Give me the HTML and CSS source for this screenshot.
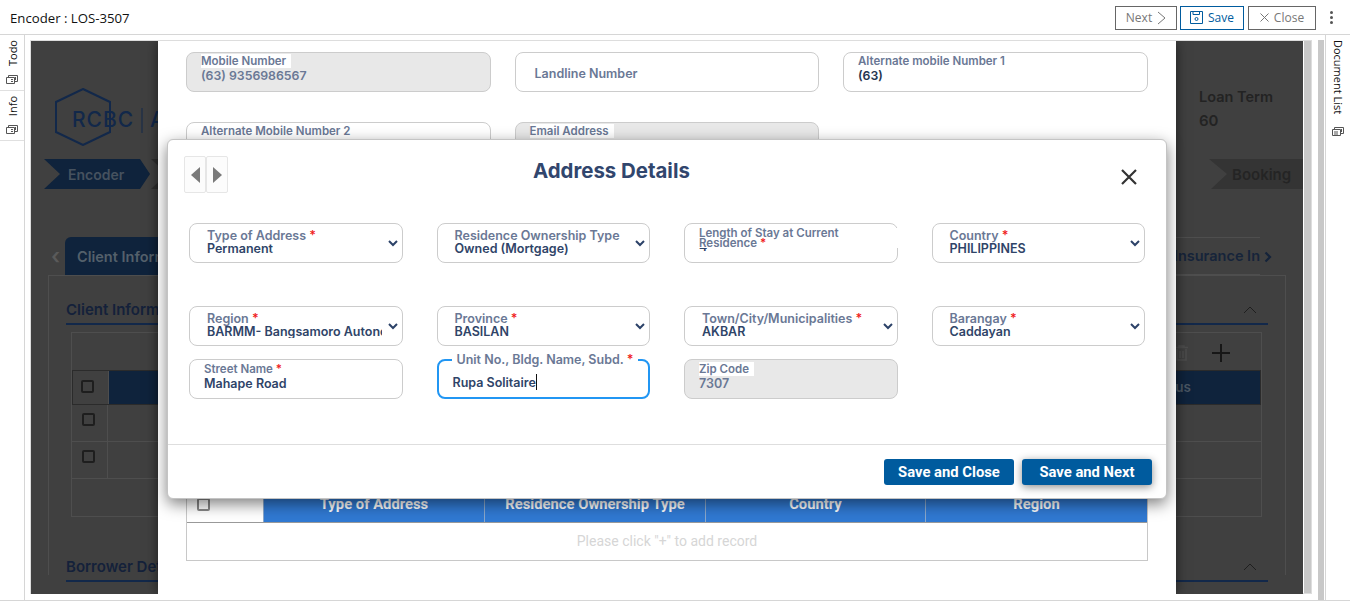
FILE: index.html
```html
<!DOCTYPE html>
<html lang="en">
<head>
  <meta charset="UTF-8">
  <title>Encoder : LOS-3507</title>
  <link rel="stylesheet" href="styles.css">
</head>
<body>
  <header class="topbar">
    <div class="topbar-title">Encoder : LOS-3507</div>
    <button class="tool-btn tool-next">Next
      <svg width="9" height="14" viewBox="0 0 9 14"><path d="M1 1l7 6-7 6" fill="none" stroke="#777" stroke-width="1"/></svg>
    </button>
    <button class="tool-btn tool-save">
      <svg width="13" height="13" viewBox="0 0 13 13" fill="none" stroke="#005b9e"><path d="M.5.5h12v12H.5z"/><path d="M3 .5v3h6.5v-3"/><circle cx="6.5" cy="8" r="1.5"/></svg>
      Save
    </button>
    <button class="tool-btn tool-close">
      <svg width="9" height="9" viewBox="0 0 9 9"><path d="M.5.5l8 8M8.5.5l-8 8" stroke="#777" fill="none"/></svg>
      Close
    </button>
    <div class="kebab"><i></i><i></i><i></i></div>
  </header>

  <div class="workspace">
    <nav class="rail rail-left">
      <div class="rail-tab rail-tab-todo">
        <span class="rail-text">Todo</span>
        <svg class="rail-icon" width="12" height="10" viewBox="0 0 12 10" fill="none" stroke="#555"><path d="M.5 3.5h8v6h-8zM2.5 3.5v-2h9v6h-3M5 5.5h2M5 7.5h2M9.5 3v3"/></svg>
      </div>
      <div class="rail-tab rail-tab-info">
        <span class="rail-text">Info</span>
        <svg class="rail-icon" width="12" height="10" viewBox="0 0 12 10" fill="none" stroke="#555"><path d="M.5 3.5h8v6h-8zM2.5 3.5v-2h9v6h-3M5 5.5h2M5 7.5h2M9.5 3v3"/></svg>
      </div>
    </nav>

    <main class="frame">
      <div class="stage">
        <!-- page behind the dialogs -->
        <div class="backdrop">
          <div class="bd-head">
            <svg class="bd-logo" width="108" height="58" viewBox="0 0 108 58" fill="none" stroke="#12284a" stroke-width="2">
              <path d="M28 1l27 13v30L28 57 1 44V14z"/>
              <text x="17" y="39" font-family="Inter, sans-serif" font-size="21" font-weight="500" letter-spacing="1" fill="#12284a" stroke="none">RCBC</text>
              <path d="M87 20v25" stroke-width="1"/>
              <text x="95" y="39" font-family="Inter, sans-serif" font-size="21" font-weight="500" fill="#12284a" stroke="none">A</text>
            </svg>
            <div class="bd-loan">
              <div>Loan Term</div>
              <div class="bd-loan-val">60</div>
            </div>
          </div>
          <div class="steps">
            <div class="step step-active">Encoder</div>
            <div class="step step-next"></div>
            <div class="step step-last">Booking</div>
          </div>
          <div class="bd-tabs">
            <span class="bd-tab-prev">‹</span>
            <div class="bd-tab">Client Information</div>
            <div class="bd-tab-rest">Insurance In</div>
            <svg class="bd-tab-next" width="8" height="12" viewBox="0 0 8 12"><path d="M1.5 1.5L6 6l-4.5 4.5" fill="none" stroke="#14233a" stroke-width="2.2"/></svg>
          </div>
          <div class="bd-panel">
            <div class="bd-section">
              <span>Client Information</span>
              <svg width="14" height="8" viewBox="0 0 14 8"><path d="M1 7l6-6 6 6" fill="none" stroke="#1f1f1f"/></svg>
            </div>
            <div class="bd-table">
              <div class="bd-tools">
                <svg width="13" height="16" viewBox="0 0 13 16" fill="none" stroke="#4c4c4c" stroke-width="1.5"><path d="M0 2.5h13M4 2.5V1h5v1.5M2 4v11h9V4M5 6v7M8 6v7"/></svg>
                <svg width="18" height="18" viewBox="0 0 18 18"><path d="M9 0v18M0 9h18" stroke="#171717" stroke-width="2"/></svg>
              </div>
              <div class="bd-row bd-row-head">
                <div class="bd-check"><i></i></div>
                <div class="bd-head-fill"><span>Status</span></div>
              </div>
              <div class="bd-row"><div class="bd-check"><i></i></div></div>
              <div class="bd-row"><div class="bd-check"><i></i></div></div>
            </div>
            <div class="bd-section bd-section-2">
              <span>Borrower Details</span>
              <svg width="14" height="8" viewBox="0 0 14 8"><path d="M1 7l6-6 6 6" fill="none" stroke="#1f1f1f"/></svg>
            </div>
          </div>
        </div>

        <!-- first dialog -->
        <section class="sheet">
          <div class="sheet-row">
            <div class="field field-wide field-off"><span class="field-label">Mobile Number</span><span class="field-value">(63) 9356986567</span></div>
            <div class="field field-wide field-empty"><span class="field-label">Landline Number</span></div>
            <div class="field field-wide"><span class="field-label">Alternate mobile Number 1</span><span class="field-value field-dark">(63)</span></div>
          </div>
          <div class="sheet-row sheet-row-2">
            <div class="field field-wide"><span class="field-label">Alternate Mobile Number 2</span></div>
            <div class="field field-wide field-off field-email"><span class="field-label">Email Address</span></div>
          </div>
          <div class="sheet-table">
            <div class="sheet-thead">
              <div class="sheet-th-check"><i></i></div>
              <div class="sheet-th">Type of Address</div>
              <div class="sheet-th">Residence Ownership Type</div>
              <div class="sheet-th">Country</div>
              <div class="sheet-th">Region</div>
            </div>
            <div class="sheet-empty">Please click "+" to add record</div>
          </div>
        </section>

        <!-- address dialog -->
        <section class="modal">
          <div class="modal-head">
            <div class="pager">
              <button class="pager-btn"><span class="tri tri-left"></span></button>
              <button class="pager-btn"><span class="tri tri-right"></span></button>
            </div>
            <h2 class="modal-title">Address Details</h2>
            <svg class="modal-x" width="16" height="16" viewBox="0 0 16 16"><path d="M1 1l14 14M15 1L1 15" stroke="#333" stroke-width="2.2" fill="none"/></svg>
          </div>

          <div class="modal-grid">
            <div class="field field-select"><span class="field-label">Type of Address <b>*</b></span><span class="field-value">Permanent</span><svg class="caret" width="10" height="7" viewBox="0 0 10 7"><path d="M1 1l4 4 4-4" fill="none" stroke="#2c4268" stroke-width="2"/></svg></div>
            <div class="field field-select"><span class="field-label">Residence Ownership Type</span><span class="field-value">Owned (Mortgage)</span><svg class="caret" width="10" height="7" viewBox="0 0 10 7"><path d="M1 1l4 4 4-4" fill="none" stroke="#2c4268" stroke-width="2"/></svg></div>
            <div class="field field-long"><span class="field-label">Length of Stay at Current Residence <b>*</b></span><span class="field-value">4</span></div>
            <div class="field field-select"><span class="field-label">Country <b>*</b></span><span class="field-value">PHILIPPINES</span><svg class="caret" width="10" height="7" viewBox="0 0 10 7"><path d="M1 1l4 4 4-4" fill="none" stroke="#2c4268" stroke-width="2"/></svg></div>

            <div class="field field-select row-gap"><span class="field-label">Region <b>*</b></span><span class="field-value field-clip">BARMM- Bangsamoro Autonomous Region</span><svg class="caret" width="10" height="7" viewBox="0 0 10 7"><path d="M1 1l4 4 4-4" fill="none" stroke="#2c4268" stroke-width="2"/></svg></div>
            <div class="field field-select row-gap"><span class="field-label">Province <b>*</b></span><span class="field-value">BASILAN</span><svg class="caret" width="10" height="7" viewBox="0 0 10 7"><path d="M1 1l4 4 4-4" fill="none" stroke="#2c4268" stroke-width="2"/></svg></div>
            <div class="field field-select row-gap"><span class="field-label">Town/City/Municipalities <b>*</b></span><span class="field-value">AKBAR</span><svg class="caret" width="10" height="7" viewBox="0 0 10 7"><path d="M1 1l4 4 4-4" fill="none" stroke="#2c4268" stroke-width="2"/></svg></div>
            <div class="field field-select row-gap"><span class="field-label">Barangay <b>*</b></span><span class="field-value">Caddayan</span><svg class="caret" width="10" height="7" viewBox="0 0 10 7"><path d="M1 1l4 4 4-4" fill="none" stroke="#2c4268" stroke-width="2"/></svg></div>

            <div class="field field-text"><span class="field-label">Street Name <b>*</b></span><span class="field-value">Mahape Road</span></div>
            <div class="field field-text field-focus"><span class="field-label">Unit No., Bldg. Name, Subd. <b>*</b></span><span class="field-value">Rupa Solitaire<i class="text-caret"></i></span></div>
            <div class="field field-text field-off"><span class="field-label">Zip Code</span><span class="field-value">7307</span></div>
          </div>

          <div class="modal-foot">
            <button class="btn-primary">Save and Close</button>
            <button class="btn-primary btn-lifted">Save and Next</button>
          </div>
        </section>
      </div>
      <div class="frame-scroll"></div>
    </main>

    <div class="page-scroll"></div>

    <nav class="rail rail-right">
      <span class="rail-text">Document List</span>
      <svg class="rail-icon" width="12" height="10" viewBox="0 0 12 10" fill="none" stroke="#555"><path d="M.5 3.5h8v6h-8zM2.500 3.5v-2h9v6h-3M3 5v4M5 5v4M9.500 3v3"/></svg>
    </nav>
  </div>
</body>
</html>
```

FILE: styles.css
```css
* { box-sizing: border-box; }
html, body { margin: 0; height: 602px; overflow: hidden; }
body { font-family: "Inter", sans-serif; background: #fff; color: #333; }
button { font-family: inherit; cursor: pointer; }

/* top bar */
.topbar {
  height: 35px;
  display: flex;
  align-items: center;
  padding: 1px 16px 0 10px;
  border-bottom: 1px solid #d6d6d6;
}
.topbar-title {
  font-family: "Open Sans", sans-serif;
  font-size: 13.2px;
  color: #111;
  margin-right: auto;
}
.tool-btn {
  height: 24px;
  margin-left: 4px;
  padding: 0;
  display: flex;
  align-items: center;
  justify-content: center;
  gap: 5px;
  background: #fff;
  border: 1px solid #666;
  font-family: "Open Sans", sans-serif;
  font-size: 12px;
  color: #777;
}
.tool-next { width: 62px; }
.tool-save { width: 64px; margin-left: 3px; border-color: #005b9e; color: #005b9e; }
.tool-close { width: 68px; }
.kebab { margin-left: 14px; width: 4px; display: flex; flex-direction: column; gap: 2px; }
.kebab i { display: block; width: 3px; height: 3px; background: #555; border-radius: 50%; }

/* shell */
.workspace { display: flex; height: 566px; border-bottom: 1px solid #d6d6d6; }
.rail { width: 25px; flex: none; background: #fff; }
.rail-left { border-right: 1px solid #d6d6d6; }
.rail-right {
  width: 25px;
  margin-left: 1px;
  border-left: 1px solid #d6d6d6;
  display: flex;
  flex-direction: column;
  align-items: center;
  gap: 12px;
  padding-top: 5px;
}
.rail-text {
  writing-mode: vertical-rl;
  font-family: "Open Sans", sans-serif;
  font-size: 11px;
  color: #111;
}
.rail-tab {
  display: flex;
  flex-direction: column;
  align-items: center;
  gap: 8px;
  border-bottom: 1px solid #e0e0e0;
}
.rail-tab .rail-text { transform: rotate(180deg); }
.rail-tab-todo { height: 56px; padding-top: 5px; }
.rail-tab-info { height: 50px; padding-top: 5px; }
.frame {
  width: 1282px;
  margin: 5px 0 6px 5px;
  border: 1px solid #ddd;
  display: flex;
  background: #fff;
}
.frame-scroll { width: 7px; margin-left: 1px; background: #c8c8c8; }
.page-scroll { width: 7px; margin-left: 6px; background: #c8c8c8; height: 560px; margin-top: 5px; }
.stage { position: relative; width: 1272px; height: 553px; overflow: hidden; background: #404040; }

/* page behind */
.backdrop { height: 100%; overflow: hidden; color: #242424; font-weight: 600; }
.bd-head { display: flex; padding: 47px 0 0 24px; height: 105px; }
.bd-loan { margin-left: auto; margin-top: -3px; width: 104px; font-size: 14.5px; color: #232323; line-height: 24px; }
.bd-loan-val { font-size: 15px; }
.steps { display: flex; height: 30px; margin-top: 13px; padding-left: 13px; }
.step {
  height: 30px;
  font-size: 14px;
  line-height: 32px;
  clip-path: polygon(0 0, calc(100% - 10px) 0, 100% 50%, calc(100% - 10px) 100%, 0 100%, 16px 50%);
}
.step-active { width: 106px; background: #0f233c; color: #46525f; padding-left: 24px; }
.step-next { width: 40px; background: #2f2f2f; margin-left: 1px; }
.step-last {
  margin-left: auto;
  width: 94px;
  background: #343434;
  padding-left: 23px;
  font-size: 15px;
  clip-path: polygon(0 0, 100% 0, 100% 100%, 2px 100%, 18px 50%);
}
.bd-tabs { display: flex; height: 38px; margin-top: 48px; align-items: center; }
.bd-tab-prev { margin-left: 20px; width: 14px; font-size: 22px; color: #5a5a5a; line-height: 30px; }
.bd-tab {
  height: 38px;
  width: 130px;
  background: #0f233c;
  color: #54606b;
  font-size: 14.5px;
  line-height: 39px;
  padding-left: 12px;
  border-radius: 6px 6px 0 0;
  white-space: nowrap;
  overflow: hidden;
}
.bd-tab-rest {
  margin-left: auto;
  width: 100px;
  font-size: 14.5px;
  color: #16243a;
  white-space: nowrap;
  overflow: hidden;
  text-align: right;
  border-top: 1px solid #4e4e4e;
  border-bottom: 1px solid #4e4e4e;
  height: 38px;
  line-height: 36px;
}
.bd-tab-next { margin: 2px 31px 0 4px; }
.bd-panel { margin: 0 17px; border: 1px solid #4e4e4e; border-bottom: 0; height: 300px; padding: 0 17px; }
.bd-section {
  height: 35px;
  margin-top: 14px;
  padding: 6px 11px 0 0;
  display: flex;
  justify-content: space-between;
  align-items: center;
  border-bottom: 2px solid #12284a;
  color: #14213a;
  font-size: 15px;
  white-space: nowrap;
}
.bd-section-2 { margin-top: 30px; }
.bd-table { margin: 7px 6px 0 5px; height: 185px; border: 1px solid #4e4e4e; }
.bd-tools { height: 37px; display: flex; justify-content: flex-end; align-items: center; gap: 24px; padding: 2px 31px 0 0; }
.bd-row { height: 37px; display: flex; border-bottom: 1px solid #4e4e4e; }
.bd-row-head { height: 35px; border: 1px solid #2b2b2b; }
.bd-check { width: 36px; display: flex; justify-content: center; align-items: flex-start; padding: 8px 2px 0 0; border-right: 1px solid #4e4e4e; }
.bd-row-head .bd-check { padding: 9px 6px 0 0; }
.bd-check i { width: 13px; height: 13px; border: 2px solid #1e1e1e; border-radius: 2px; }
.bd-head-fill { flex: 1; background: #0f233c; color: #4a5663; font-size: 13.5px; display: flex; align-items: center; justify-content: flex-end; padding: 0 69px 2px 0; }

/* first dialog */
.sheet {
  position: absolute;
  left: 127px;
  top: 0;
  width: 1018px;
  height: 553px;
  background: #fff;
  padding: 11px 28px 0;
  box-shadow: 0 0 12px rgba(0, 0, 0, .55);
}
.sheet-row { display: flex; gap: 24px; }
.sheet-row-2 { margin-top: 30px; }
.field {
  position: relative;
  display: flex;
  flex-direction: column;
  height: 40px;
  background: #fff;
  border: 1px solid #ccc;
  border-radius: 8px;
  font-weight: 600;
  line-height: 14px;
  white-space: nowrap;
}
.field-label { color: #6a7895; font-size: 11.5px; }
.field-label b { color: #f01c1c; font-weight: 600; }
.field-value { color: #2f4468; font-size: 12.5px; }
.field-dark { color: #24344f; }
.field-wide { width: 304.5px; padding: 1px 14px; }
.field-wide .field-value { margin-top: 1px; font-size: 12.3px; }
.field-off { background: #e8e8e8; }
.field-off .field-label { background: #fff; align-self: flex-start; padding-right: 5px; }
.field-off .field-value { color: #6a7895; }
.field-empty { justify-content: center; padding: 3px 0 0 19px; }
.field-empty .field-label { font-size: 12.5px; }
.sheet-table { margin-top: 324px; width: 962px; border: 1px solid #c8c8c8; border-top: 0; }
.sheet-thead { display: grid; grid-template-columns: 76px 221px 221px 220px 1fr; height: 37px; border-bottom: 1px solid #999; }
.sheet-th-check { display: flex; align-items: center; justify-content: center; padding-right: 44px; }
.sheet-th-check i { width: 13px; height: 13px; border: 2px solid #888; border-radius: 2px; }
.sheet-th {
  background: #3079d2;
  color: #fff;
  border-left: 1px solid #8aa8cc;
  font-family: "Roboto", sans-serif;
  font-size: 14.8px;
  font-weight: 700;
  line-height: 36px;
  text-align: center;
}
.sheet-empty {
  height: 37px;
  text-align: center;
  font-family: "Roboto", sans-serif;
  font-size: 14px;
  line-height: 36px;
  color: #d6d6d6;
}

/* address dialog */
.modal {
  position: absolute;
  left: 136px;
  top: 98px;
  width: 1000px;
  height: 360px;
  background: #fff;
  border: 1px solid #c4c4c4;
  border-radius: 6px;
  box-shadow: 0 5px 15px rgba(0, 0, 0, .5);
}
.modal-head { height: 83px; display: flex; align-items: flex-start; padding: 16px 29px 0 16px; }
.pager { display: flex; width: 44px; }
.pager-btn {
  width: 22px;
  height: 37px;
  padding: 0;
  background: #fcfcfc;
  border: 1px solid #e6e6e6;
  border-radius: 2px;
  display: flex;
  align-items: center;
  justify-content: center;
}
.tri { width: 0; height: 0; border-top: 8px solid transparent; border-bottom: 8px solid transparent; }
.tri-left { border-right: 9px solid #7a7a7a; }
.tri-right { border-left: 9px solid #7a7a7a; }
.modal-title {
  margin: 3px 0 0 305px;
  font-size: 20.4px;
  font-weight: 700;
  line-height: 24px;
  color: #31466d;
}
.modal-x { margin: 13px 0 0 auto; }
.modal-grid {
  display: grid;
  grid-template-columns: repeat(4, 213.5px);
  grid-auto-rows: max-content;
  align-content: start;
  column-gap: 34px;
  padding-left: 21px;
  height: 221px;
}
.row-gap { margin-top: 43px; }
.field-select { padding: 6px 20px 0 17px; }
.field-select .field-label { font-size: 12.5px; line-height: 12px; }
.field-select .field-value { line-height: 13px; }
.field-clip { overflow: hidden; }
.caret { position: absolute; right: 4px; top: 16px; }
.field-text { margin-top: 13px; padding: 2px 14px; }
.field-text .field-value { margin-top: 1px; }
.field-long { padding: 4px 0 0 14px; }
.field-long .field-label {
  font-size: 11.5px;
  line-height: 10px;
  white-space: normal;
  background: #fff;
  margin-right: -1px;
  padding-right: 50px;
  z-index: 1;
}
.field-long .field-value { line-height: 14px; margin-top: -8px; }
.field-focus { border: 2px solid #2196f3; padding: 7px 14px 7px; justify-content: flex-end; }
.field-focus .field-label {
  position: absolute;
  left: 13px;
  top: -8px;
  background: #fff;
  padding: 0 5px;
  font-size: 12.5px;
}
.text-caret { display: inline-block; width: 1px; height: 16px; background: #111; vertical-align: -3px; }
.modal-foot {
  height: 55px;
  border-top: 1px solid #dedede;
  display: flex;
  justify-content: flex-end;
  align-items: flex-start;
  gap: 8px;
  padding: 14px 14px 0 0;
}
.btn-primary {
  width: 130px;
  height: 26px;
  padding: 0;
  background: #005b9e;
  border: 0;
  border-radius: 3px;
  color: #fff;
  font-family: "Roboto", sans-serif;
  font-size: 14.8px;
  font-weight: 700;
}
.btn-lifted { box-shadow: 0 2px 8px rgba(0, 0, 0, .45); }
```
